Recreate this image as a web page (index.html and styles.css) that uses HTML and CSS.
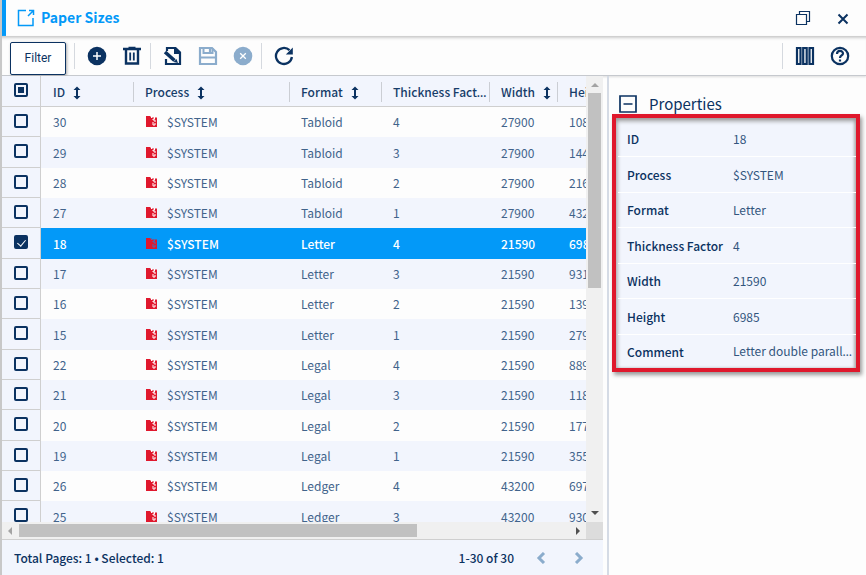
FILE: index.html
```html
<!DOCTYPE html>
<html lang="en">
<head>
<meta charset="utf-8">
<title>Paper Sizes</title>
<link rel="stylesheet" href="styles.css">
</head>
<body>
<svg class="sprite" aria-hidden="true">
  <symbol id="sort" viewBox="0 0 8 14"><path d="M4 2v10" fill="none" stroke="currentColor" stroke-width="2"/><path d="M0.500 4 4 0.500 7.500 4zM0.500 10 4 13.500l3.500-3.500z" fill="currentColor"/></symbol>
  <symbol id="file" viewBox="0 0 11 11"><path d="M0 0h4l1.500 1.500H11V11H0z" fill="#e0182d"/><path d="M5.500 0v2M8.500 1v2h-1.500v1h2v2M7 6v3h2V7" fill="none" stroke="currentColor"/></symbol>
</svg>
<main class="window">
  <header class="titlebar">
    <svg class="i18" viewBox="0 0 18 18" fill="none" stroke="currentColor" stroke-width="1.500"><path d="M9 1.500H1.500v15H16V9M11 7l5-5M12 1.500h4.500V6"/></svg>
    <h1>Paper Sizes</h1>
    <button class="icon" aria-label="Restore"><svg class="i16" viewBox="0 0 16 16" fill="none" stroke="currentColor" stroke-width="1.200"><path d="M1.500 4.500h10v10h-10zM4.500 4.500v-3h10v10h-3"/></svg></button>
    <button class="icon" aria-label="Close"><svg class="i16" viewBox="0 0 16 16" fill="none" stroke="currentColor" stroke-width="2"><path d="m3.500 4.500 9 9m0-9-9 9"/></svg></button>
  </header>
  <div class="toolbar">
    <button class="filter">Filter</button>
    <div class="group">
      <button class="icon" aria-label="Add"><svg class="i20" viewBox="0 0 20 20"><circle cx="10" cy="10" r="9.300" fill="currentColor"/><path d="M10 6v8M6 10h8" stroke="#fff" stroke-width="1.500"/></svg></button>
      <button class="icon" aria-label="Delete"><svg class="i20" viewBox="0 0 20 20" fill="none" stroke="currentColor"><path d="M1 3h18M6.500 2h7" stroke-width="2.500"/><path d="M4 4v13.500h12V4" stroke-width="2.400"/><path d="M8.200 6.500v8m3.600-8v8" stroke-width="1.800"/></svg></button>
    </div>
    <div class="group">
      <button class="icon" aria-label="Edit"><svg class="i20" viewBox="0 0 20 20" fill="none" stroke="currentColor"><path d="M4 5V2h8.500L17 6.500V18H3v-5" stroke-width="2.200"/><path d="M11 1v7h7z" fill="currentColor" stroke="none"/><path d="m2 6 9.500 8.500" stroke-width="3.600"/><path d="m10.500 16 4.500 1-1.500-4z" fill="currentColor" stroke="none"/></svg></button>
      <button class="icon" aria-label="Save" disabled><svg class="i20" viewBox="0 0 20 20" fill="none" stroke="currentColor" stroke-width="2.200"><path d="M2 2h12L18 6v12H2z"/><path d="M5.500 2v5h9V2M2 11.500h16" stroke-width="2"/><path d="M12 3v3"/></svg></button>
      <button class="icon" aria-label="Cancel" disabled><svg class="i20" viewBox="0 0 20 20"><circle cx="10" cy="10" r="9.300" fill="currentColor"/><path d="m7.200 7.200 5.600 5.600m0-5.600-5.600 5.600" stroke="#fff" stroke-width="1.300"/></svg></button>
    </div>
    <div class="group">
      <button class="icon" aria-label="Refresh"><svg class="i20" viewBox="0 0 20 20" fill="none" stroke="currentColor" stroke-width="2.300"><path d="M17.900 11A8 8 0 1 1 15.500 4.200"/><path d="M18.800 1.500v7h-7z" fill="currentColor" stroke="none"/></svg></button>
    </div>
    <div class="group end">
      <button class="icon" aria-label="Columns"><svg class="i20" viewBox="0 0 20 20" fill="none" stroke="currentColor" stroke-width="2.200"><path d="M2 2h3.500v16H2zM8.200 2h3.500v16H8.200zM14.500 2H18v16h-3.500z"/></svg></button>
      <button class="icon" aria-label="Help"><svg class="i20" viewBox="0 0 20 20" fill="none" stroke="currentColor" stroke-width="2.200"><circle cx="10" cy="10" r="8.200"/><path d="M7 8c0-4 6-4 6-.5 0 2-3 2-3 4.500M10 13.500v2"/></svg></button>
    </div>
  </div>
  <div class="content">
    <section class="list">
      <div class="viewport">
        <div class="scroller">
          <table class="grid">
            <colgroup><col class="c-check"><col class="c-id"><col class="c-process"><col class="c-format"><col class="c-thick"><col class="c-width"><col class="c-height"></colgroup>
            <thead><tr>
              <th><input type="checkbox" class="some" aria-label="Select all"></th>
              <th>ID<svg class="sort"><use href="#sort"/></svg></th>
              <th><div class="head">Process<svg class="sort"><use href="#sort"/></svg></div></th>
              <th><div class="head">Format<svg class="sort"><use href="#sort"/></svg></div></th>
              <th><div class="head clip"><span>Thickness Factor</span></div></th>
              <th><div class="head">Width<svg class="sort"><use href="#sort"/></svg></div></th>
              <th><div class="head">Height</div></th>
            </tr></thead>
            <tbody id="rows"></tbody>
          </table>
        </div>
        <div class="vbar"><i class="up"></i><b></b><i class="down"></i></div>
        <div class="hbar"><i class="left"></i><b></b><i class="right"></i></div>
        <div class="corner"></div>
      </div>
      <footer class="pager">
        <span class="total">Total Pages: 1 • Selected: 1</span>
        <span>1-30 of 30</span>
        <button class="icon" aria-label="Previous page" disabled><svg class="i12" viewBox="0 0 12 12" fill="none" stroke="currentColor" stroke-width="3"><path d="M9 1 4 6l5 5"/></svg></button>
        <button class="icon" aria-label="Next page" disabled><svg class="i12" viewBox="0 0 12 12" fill="none" stroke="currentColor" stroke-width="3"><path d="m3 1 5 5-5 5"/></svg></button>
      </footer>
    </section>
    <aside class="details">
      <h2><button class="icon" aria-label="Collapse"><svg class="i18" viewBox="0 0 18 18" fill="none" stroke="currentColor" stroke-width="1.700"><path d="M1 1h16v16H1zM4.500 9h9"/></svg></button>Properties</h2>
      <div class="frame">
        <table class="props">
          <tr><th>ID</th><td>18</td></tr>
          <tr><th>Process</th><td>$SYSTEM</td></tr>
          <tr><th>Format</th><td>Letter</td></tr>
          <tr><th>Thickness Factor</th><td>4</td></tr>
          <tr><th>Width</th><td>21590</td></tr>
          <tr><th>Height</th><td>6985</td></tr>
          <tr><th>Comment</th><td class="clip"><span>Letter double parallel fold</span></td></tr>
        </table>
      </div>
    </aside>
  </div>
</main>
<script src="rows.js"></script>
</body>
</html>
```
FILE: styles.css
```css
* { box-sizing: border-box; }
body {
  margin: 0;
  background: #fdfdfd;
  color: #0b3261;
  font: 12px/20px "Noto Sans CJK KR", "Noto Sans", sans-serif;
}
button, input { font: inherit; margin: 0; }
svg { display: block; flex: none; }
.sprite { position: absolute; width: 0; height: 0; }
.i12 { width: 12px; height: 12px; }
.i16 { width: 16px; height: 16px; }
.i18 { width: 18px; height: 18px; }
.i20 { width: 20px; height: 20px; }
.icon { display: flex; padding: 0; border: 0; background: none; color: #0b3261; }
.icon:disabled { color: #8baccc; }
.window { display: flex; flex-direction: column; height: 100vh; border-left: 2px solid #c8c8c8; overflow: hidden; }

/* The ellipsis takes the block's font, the text keeps the page font. */
.clip { overflow: hidden; text-overflow: ellipsis; white-space: nowrap; font-family: "Noto Sans", sans-serif; }
.clip span { font-family: "Noto Sans CJK KR", "Noto Sans", sans-serif; }

.titlebar {
  display: flex;
  align-items: center;
  gap: 6px;
  height: 36px;
  flex: none;
  padding: 0 15px 0 11px;
  border-left: 4px solid #0399f8;
  color: #0399f8;
}
h1 { flex: 1; margin: 0; font-size: 14px; font-weight: 700; line-height: 20px; padding-bottom: 2px; }
.titlebar .icon + .icon { margin-left: 18px; }
.toolbar {
  display: flex;
  align-items: center;
  height: 40px;
  flex: none;
  padding: 0 16px 0 8px;
  border-top: 1px solid #d0d0d0;
  border-bottom: 1px solid #c6c9ce;
  box-shadow: inset 0 3px 3px -2px #ccc, 0 1px 2px #ddd;
}
.filter {
  width: 56px;
  height: 33px;
  margin-top: 4px;
  border: 1px solid #0b3261;
  border-radius: 2px;
  background: #fff;
  color: #0b3261;
  font: 12px Roboto, sans-serif;
  box-shadow: 1px 1px 3px #aaa;
}
.group { display: flex; align-items: center; gap: 15px; height: 26px; margin-left: 8px; padding-left: 12px; border-left: 1px solid #d5d9df; }
.group + .end { margin-left: auto; }

.content { display: flex; flex: 1; min-height: 0; }
.list { display: flex; flex-direction: column; flex: 1; min-width: 0; margin-right: 4px; background: #f2f5fd; }
.viewport { display: grid; grid-template: minmax(0, 1fr) 17px / minmax(0, 1fr) 17px; flex: 1; min-height: 0; border-bottom: 1px solid #cfcfcf; }
.scroller { overflow: hidden; }
.grid { width: 640px; border-collapse: separate; border-spacing: 0; table-layout: fixed; }
.c-check { width: 39px; }
.c-id { width: 92px; }
.c-process { width: 156px; }
.c-format { width: 92px; }
.c-thick { width: 108px; }
.c-width { width: 68px; }
.grid th { height: 31px; padding: 1px 0 0; border-bottom: 1px solid #cfcfcf; background: #f2f5fd; font-weight: 500; text-align: left; color: #173d69; }
.grid th:nth-child(2) { padding-left: 12px; }
.head { height: 20px; padding: 0 1px 0 11px; border-left: 1px solid #cbced4; }
.sort { display: inline-block; width: 8px; height: 14px; margin-left: 8px; vertical-align: -3px; color: #0b3261; }
.grid td { height: 30px; padding: 0 0 0 12px; color: #41638b; white-space: nowrap; }
.grid tr:nth-child(3n + 2) td { height: 31px; }
.grid tr > :first-child { padding: 0 0 2px 12px; border-right: 1px solid #cfcfcf; border-bottom: 1px solid #cfcfcf; background: #f2f5fd; }
.grid tbody tr:nth-child(odd) { background: #fdfdfd; }
.grid tbody tr.selected { background: #0399f8; }
.grid tr.selected td { color: #fff; font-weight: 500; }
.file { display: inline-block; width: 11px; height: 11px; margin: 0 10px 0 1px; vertical-align: 0; color: #fff; }
.selected .file { color: #4a6db5; }
input[type="checkbox"] {
  display: grid;
  place-items: center;
  appearance: none;
  width: 14px;
  height: 14px;
  border: 2px solid #0b3261;
  border-radius: 2px;
}
input.some::before { content: ""; width: 6px; height: 6px; background: #0b3261; }
input:checked { background: #0b3261; }
input:checked::before { content: ""; width: 4px; height: 7px; border: solid #fff; border-width: 0 1px 1px 0; transform: rotate(40deg); }

.vbar, .hbar { display: flex; align-items: center; background: #f0f0f0; }
.vbar { flex-direction: column; padding: 7px 0; }
.vbar b { width: 13px; height: 195px; margin: 6px 0 auto; background: #c1c1c1; }
.hbar { padding: 0 6px; }
.hbar b { width: 398px; height: 13px; margin: 0 auto 0 7px; background: #c1c1c1; }
.corner { background: #dcdcdc; }
.vbar i, .hbar i { border: 4px solid transparent; }
.vbar .up { border-top: 0; border-bottom-color: #a3a3a3; }
.vbar .down { border-bottom: 0; border-top-color: #505050; }
.hbar .left { border-left: 0; border-right-color: #a3a3a3; }
.hbar .right { border-right: 0; border-left-color: #505050; }

.pager { display: flex; align-items: center; gap: 21px; height: 35px; flex: none; padding: 0 18px 0 12px; font-weight: 500; }
.pager .icon + .icon { margin-left: 5px; }
.total { flex: 1; }
.details { flex: 0 0 259px; min-width: 0; padding: 17px 6px 0 3px; border-left: 2px solid #d5dbe5; }
h2 { display: flex; align-items: center; gap: 12px; height: 21px; margin: 0 0 0 7px; font-size: 15px; font-weight: 400; line-height: 22px; }
.frame { border: 4px solid #df182c; padding: 4px 0 0 2px; box-shadow: 2px 3px 4px #999, inset 1px 3px 4px #999, inset -2px 0 3px #bbb; background: #f2f5fd; }
.props { width: 100%; table-layout: fixed; border-collapse: separate; border-spacing: 0; }
.props th, .props td { height: 35px; padding: 0 0 0 9px; border-bottom: 1px solid #fff; text-align: left; white-space: nowrap; }
.props tr:nth-child(even) > * { height: 36px; }
.props tr:last-child > * { height: 33px; border: 0; }
.props th { width: 106px; font-weight: 500; }
.props td { color: #33557d; }
```
FILE: rows.js
```js
const rows = [
  [30, "Tabloid", 4, 27900, 10800], [29, "Tabloid", 3, 27900, 14400],
  [28, "Tabloid", 2, 27900, 21600], [27, "Tabloid", 1, 27900, 43200],
  [18, "Letter", 4, 21590, 6985], [17, "Letter", 3, 21590, 9313],
  [16, "Letter", 2, 21590, 13970], [15, "Letter", 1, 21590, 27940],
  [22, "Legal", 4, 21590, 8890], [21, "Legal", 3, 21590, 11853],
  [20, "Legal", 2, 21590, 17780], [19, "Legal", 1, 21590, 35560],
  [26, "Ledger", 4, 43200, 6975], [25, "Ledger", 3, 43200, 9300]
];
document.getElementById("rows").innerHTML = rows.map(([id, format, thick, width, height]) => `
  <tr class="${id === 18 ? "selected" : ""}">
    <td><input type="checkbox" aria-label="Select ${id}" ${id === 18 ? "checked" : ""}></td>
    <td>${id}</td><td><svg class="file"><use href="#file"/></svg>$SYSTEM</td>
    <td>${format}</td><td>${thick}</td><td>${width}</td><td>${height}</td>
  </tr>`).join("");
```
